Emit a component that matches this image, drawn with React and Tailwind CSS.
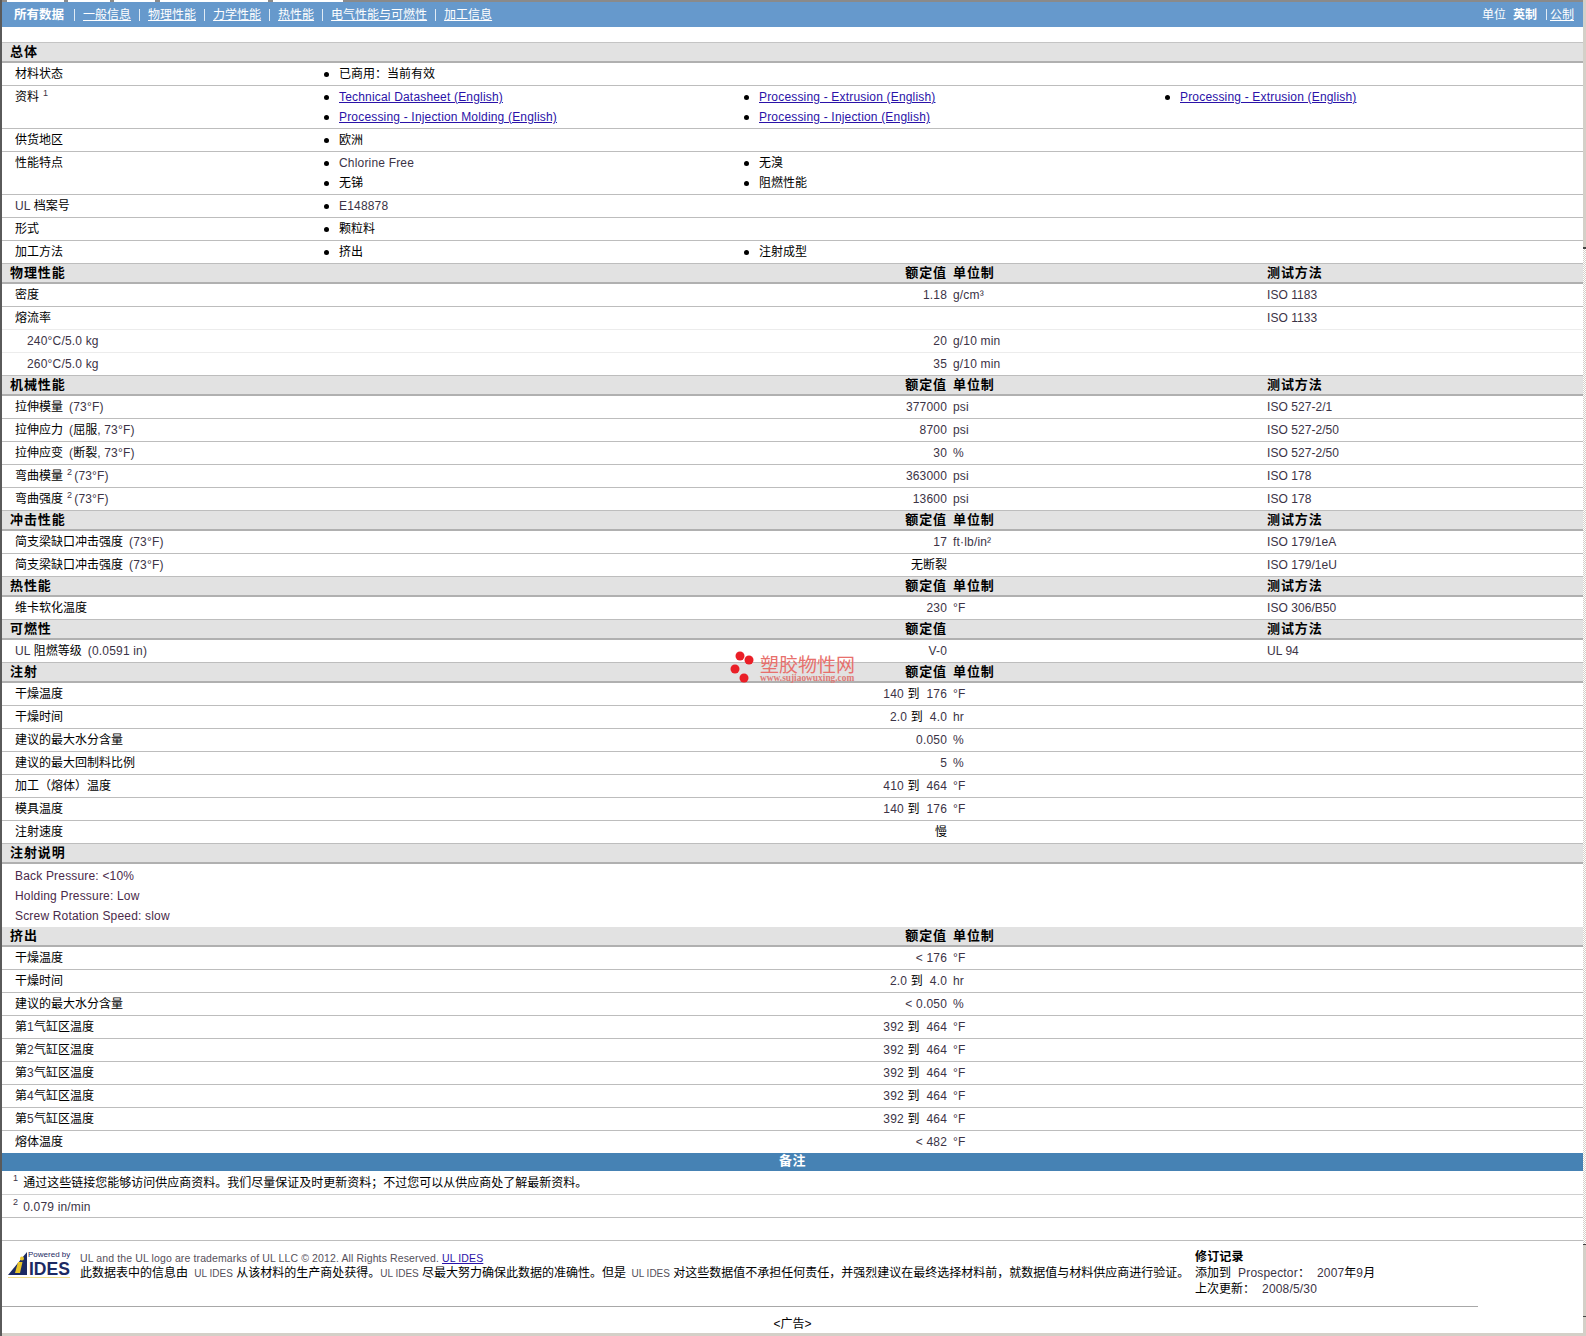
const latin = "text-[#3b3346]";

// 中文用黑色，西文数字用偏紫的深灰
const Mixed = ({ text }) => (
  <>
    {text.split(/([\u3000-\u303f\u4e00-\u9fff\uff00-\uffef]+)/).map((part, i) =>
      i % 2 === 1 ? (
        <span key={i} className="text-black tracking-normal">{part}</span>
      ) : (
        <span key={i} className={latin}>{part}</span>
      )
    )}
  </>
);

const Sup = ({ n }) => <sup className="text-[9px] text-[#3b3346] ml-[4px] -top-[5px]">{n}</sup>;

const SectionHead = ({ title, value, unit, method }) => (
  <div className="h-[20px] grid grid-cols-[700px_245px_320px_1fr] items-center bg-[#e2e2e2] border-b-2 border-[#b0b0b0] text-[13px] font-bold text-black">
    <div className="pl-[8px] tracking-[0.9px]">{title}</div>
    <div className="text-right tracking-[0.9px]">{value}</div>
    <div className="pl-[6px] tracking-[0.9px]">{unit}</div>
    <div className="tracking-[0.9px]">{method}</div>
  </div>
);

const DataRow = ({ label, note, rest, value, unit, method, sub, light, last }) => (
  <div className={`grid grid-cols-[700px_245px_320px_1fr] items-center ${last ? "h-[22px]" : "h-[23px] border-b"} ${light ? "border-[#ececec]" : "border-[#bdbdbd]"}`}>
    <div className={sub ? "pl-[25px]" : "pl-[13px]"}>
      <Mixed text={label} />
      {note && <Sup n={note} />}
      {rest && <span className={note ? "ml-[2px]" : "ml-[6px]"}><Mixed text={rest} /></span>}
    </div>
    <div className="text-right whitespace-pre"><Mixed text={value || ""} /></div>
    <div className="pl-[6px]"><Mixed text={unit || ""} /></div>
    <div className="tracking-[0.05px]"><Mixed text={method || ""} /></div>
  </div>
);

const Bullet = ({ children }) => (
  <div className="h-[20px] flex items-center">
    <span className="w-[5px] h-[5px] rounded-full bg-black mr-[10px] shrink-0"></span>
    {children}
  </div>
);

const DocLink = ({ children }) => <a href="#" className="text-[#2a12a8] underline">{children}</a>;

const InfoRow = ({ label, note, cols }) => (
  <div className="grid grid-cols-[322px_420px_421px_1fr] border-b border-[#bdbdbd] pt-[1px] pb-[1px]">
    <div className="pl-[13px] h-[20px] flex items-center">
      <span><Mixed text={label} />{note && <Sup n={note} />}</span>
    </div>
    {cols.map((items, i) => (
      <div key={i}>{items.map((it, j) => <Bullet key={j}>{typeof it === "string" ? <Mixed text={it} /> : it}</Bullet>)}</div>
    ))}
  </div>
);

const NavSep = () => <span className="w-px h-[12px] bg-white/80"></span>;

const navItems = ["一般信息", "物理性能", "力学性能", "热性能", "电气性能与可燃性", "加工信息"];

const Logo = () => (
  <div className="w-[64px] h-[28px] relative shrink-0 tracking-normal">
    <svg width="64" height="28" viewBox="0 0 64 28" className="absolute left-0 top-0">
      <path d="M0 23 L19 0 V23 Z" fill="#1c2a63" />
      <path d="M10 10 h4.5 l-2.5 11 h-5 z" fill="#e8c42a" />
      <circle cx="14" cy="6.5" r="2" fill="#e8c42a" />
      <path d="M0 25.5 H62" stroke="#eedc8a" strokeWidth="1" />
    </svg>
    <span className="absolute left-[20px] -top-[2px] text-[8px] leading-[10px] text-[#1c2a63] whitespace-nowrap">Powered by</span>
    <span className="absolute left-[21px] top-[8px] text-[17.5px] leading-[18px] font-bold text-[#1c2a63]">IDES</span>
  </div>
);

const Watermark = () => (
  <div className="absolute left-[730px] top-[650px] w-[130px] h-[36px] tracking-normal">
    <svg width="26" height="36" className="absolute left-0 top-0">
      <circle cx="10" cy="6" r="4.5" fill="#ea1f27" />
      <circle cx="19" cy="10" r="4.5" fill="#ea1f27" />
      <circle cx="5" cy="19" r="4.5" fill="#ea1f27" />
      <circle cx="14" cy="28" r="4.5" fill="#ea1f27" />
    </svg>
    <div className="absolute left-[30px] top-[5px] text-[19px] leading-[22px] text-[#e8706c] whitespace-nowrap">塑胶物性网</div>
    <div className="absolute left-[30px] top-[23px] text-[9.4px] leading-[10px] font-bold text-[#dd7a76] whitespace-nowrap font-['Liberation_Serif',serif]">www.sujiaowuxing.com</div>
  </div>
);

const App = () => {
  return (
    <div className="relative w-[1586px] h-[1336px] flex bg-white text-[12px] leading-[16px] text-black tracking-[0.18px] font-['Liberation_Sans','Noto_Sans_CJK_SC',sans-serif] overflow-hidden">
      <div className="w-[1583px] flex flex-col border-l-2 border-[#5a5a5a]">
        <div className="h-[2px] flex bg-[#8a8a8a]">
          <div className="ml-[5px] w-[57px] bg-white"></div>
          <div className="ml-[4px] w-[42px] bg-white"></div>
          <div className="ml-[4px] w-[41px] bg-white"></div>
          <div className="ml-[5px] w-[108px] bg-white"></div>
          <div className="ml-[5px] w-[70px] bg-white"></div>
        </div>

        <div className="h-[25px] bg-[#6699cc] text-white flex items-center justify-between pl-[12px] pr-[9px] tracking-normal">
          <div className="flex items-center gap-[8px]">
            <span className="font-bold text-[12.5px] mr-[2px]">所有数据</span>
            {navItems.map((n) => (
              <div key={n} className="flex items-center gap-[8px]">
                <NavSep />
                <a href="#" className="underline">{n}</a>
              </div>
            ))}
          </div>
          <div className="flex items-center">
            <span>单位</span>
            <span className="font-bold ml-[7px]">英制</span>
            <span className="ml-[9px] mr-[3px] w-px h-[11px] bg-white/80"></span>
            <a href="#" className="underline">公制</a>
          </div>
        </div>

        <div className="h-[16px] border-b border-[#c4c4c4]"></div>

        <SectionHead title="总体" />
        <InfoRow label="材料状态" cols={[["已商用：当前有效"]]} />
        <InfoRow
          label="资料"
          note="1"
          cols={[
            [<DocLink>Technical Datasheet (English)</DocLink>, <DocLink>Processing - Injection Molding (English)</DocLink>],
            [<DocLink>Processing - Extrusion (English)</DocLink>, <DocLink>Processing - Injection (English)</DocLink>],
            [<DocLink>Processing - Extrusion (English)</DocLink>],
          ]}
        />
        <InfoRow label="供货地区" cols={[["欧洲"]]} />
        <InfoRow label="性能特点" cols={[["Chlorine Free", "无锑"], ["无溴", "阻燃性能"]]} />
        <InfoRow label="UL 档案号" cols={[["E148878"]]} />
        <InfoRow label="形式" cols={[["颗粒料"]]} />
        <InfoRow label="加工方法" cols={[["挤出"], ["注射成型"]]} />

        <SectionHead title="物理性能" value="额定值" unit="单位制" method="测试方法" />
        <DataRow label="密度" value="1.18" unit="g/cm³" method="ISO 1183" />
        <DataRow label="熔流率" method="ISO 1133" light />
        <DataRow label="240°C/5.0 kg" sub value="20" unit="g/10 min" light />
        <DataRow label="260°C/5.0 kg" sub value="35" unit="g/10 min" />

        <SectionHead title="机械性能" value="额定值" unit="单位制" method="测试方法" />
        <DataRow label="拉伸模量" rest="(73°F)" value="377000" unit="psi" method="ISO 527-2/1" />
        <DataRow label="拉伸应力" rest="(屈服, 73°F)" value="8700" unit="psi" method="ISO 527-2/50" />
        <DataRow label="拉伸应变" rest="(断裂, 73°F)" value="30" unit="%" method="ISO 527-2/50" />
        <DataRow label="弯曲模量" note="2" rest="(73°F)" value="363000" unit="psi" method="ISO 178" />
        <DataRow label="弯曲强度" note="2" rest="(73°F)" value="13600" unit="psi" method="ISO 178" />

        <SectionHead title="冲击性能" value="额定值" unit="单位制" method="测试方法" />
        <DataRow label="简支梁缺口冲击强度" rest="(73°F)" value="17" unit="ft·lb/in²" method="ISO 179/1eA" />
        <DataRow label="简支梁缺口冲击强度" rest="(73°F)" value="无断裂" method="ISO 179/1eU" />

        <SectionHead title="热性能" value="额定值" unit="单位制" method="测试方法" />
        <DataRow label="维卡软化温度" value="230" unit="°F" method="ISO 306/B50" />

        <SectionHead title="可燃性" value="额定值" method="测试方法" />
        <DataRow label="UL 阻燃等级" rest="(0.0591 in)" value="V-0" method="UL 94" />

        <SectionHead title="注射" value="额定值" unit="单位制" />
        <DataRow label="干燥温度" value="140 到  176" unit="°F" />
        <DataRow label="干燥时间" value="2.0 到  4.0" unit="hr" />
        <DataRow label="建议的最大水分含量" value="0.050" unit="%" />
        <DataRow label="建议的最大回制料比例" value="5" unit="%" />
        <DataRow label="加工（熔体）温度" value="410 到  464" unit="°F" />
        <DataRow label="模具温度" value="140 到  176" unit="°F" />
        <DataRow label="注射速度" value="慢" />

        <SectionHead title="注射说明" />
        <div className="h-[63px] pl-[13px] pt-[2px] text-[#4a2a4a]">
          <div className="h-[20px] flex items-center">Back Pressure: &lt;10%</div>
          <div className="h-[20px] flex items-center">Holding Pressure: Low</div>
          <div className="h-[20px] flex items-center">Screw Rotation Speed: slow</div>
        </div>

        <SectionHead title="挤出" value="额定值" unit="单位制" />
        <DataRow label="干燥温度" value="< 176" unit="°F" />
        <DataRow label="干燥时间" value="2.0 到  4.0" unit="hr" />
        <DataRow label="建议的最大水分含量" value="< 0.050" unit="%" />
        <DataRow label="第1气缸区温度" value="392 到  464" unit="°F" />
        <DataRow label="第2气缸区温度" value="392 到  464" unit="°F" />
        <DataRow label="第3气缸区温度" value="392 到  464" unit="°F" />
        <DataRow label="第4气缸区温度" value="392 到  464" unit="°F" />
        <DataRow label="第5气缸区温度" value="392 到  464" unit="°F" />
        <DataRow label="熔体温度" value="< 482" unit="°F" last />

        <div className="h-[18px] bg-[#4682b4] text-white font-bold text-[13px] flex items-center justify-center pb-[2px] tracking-[0.4px]">备注</div>
        <div className="h-[24px] flex items-center pl-[11px] pt-[1px] border-b border-[#d0d0d0]">
          <sup className="text-[9px] text-[#3b3346] -top-[5px] mr-[5px]">1</sup>
          <Mixed text="通过这些链接您能够访问供应商资料。我们尽量保证及时更新资料；不过您可以从供应商处了解最新资料。" />
        </div>
        <div className="h-[23px] flex items-center pl-[11px] pt-[2px] border-b border-[#bdbdbd]">
          <sup className="text-[9px] text-[#3b3346] -top-[5px] mr-[5px]">2</sup>
          <Mixed text="0.079 in/min" />
        </div>
        <div className="h-[23px] border-b border-[#bdbdbd]"></div>

        <div className="h-[66px] w-[1476px] flex border-b border-[#a8a8a8]">
          <div className="pl-[6px] pt-[11px]"><Logo /></div>
          <div className="w-[1123px] pl-[8px] pt-[10px] text-[10.5px] leading-[15px] tracking-[0.12px]">
            <div className="text-[#55505a]">
              UL and the UL logo are trademarks of UL LLC © 2012. All Rights Reserved. <a href="#" className="text-[#2a12a8] underline">UL IDES</a>
            </div>
            <div className="text-[12px] tracking-normal whitespace-nowrap">
              此数据表中的信息由 <span className="text-[10px] text-[#55505a] ml-[3px]">UL IDES</span> 从该材料的生产商处获得。<span className="text-[10px] text-[#55505a]">UL IDES</span> 尽最大努力确保此数据的准确性。但是 <span className="text-[10px] text-[#55505a] ml-[2px]">UL IDES</span> 对这些数据值不承担任何责任，并强烈建议在最终选择材料前，就数据值与材料供应商进行验证。
            </div>
          </div>
          <div className="pt-[8px] whitespace-pre">
            <div className="font-bold">修订记录</div>
            <div><Mixed text="添加到  Prospector：  2007年9月" /></div>
            <div><Mixed text="上次更新：  2008/5/30" /></div>
          </div>
        </div>

        <div className="h-[26px] flex items-center justify-center pt-[8px] tracking-normal">&lt;广告&gt;</div>
        <div className="h-[3px] bg-[#d4d0c8]"></div>
      </div>

      <div className="w-[3px] flex flex-col bg-[#d4d0c8]">
        <div className="h-[247px]"></div>
        <div className="h-[2px] bg-[#444]"></div>
        <div className="h-[995px] bg-[repeating-conic-gradient(#d4d0c8_0_25%,#ffffff_0_50%)] bg-[length:2px_2px]"></div>
        <div className="h-[1px] bg-[#444]"></div>
        <div className="h-[71px]"></div>
        <div className="h-[1px] bg-[#444]"></div>
      </div>

      <Watermark />
    </div>
  );
};

export default App;
